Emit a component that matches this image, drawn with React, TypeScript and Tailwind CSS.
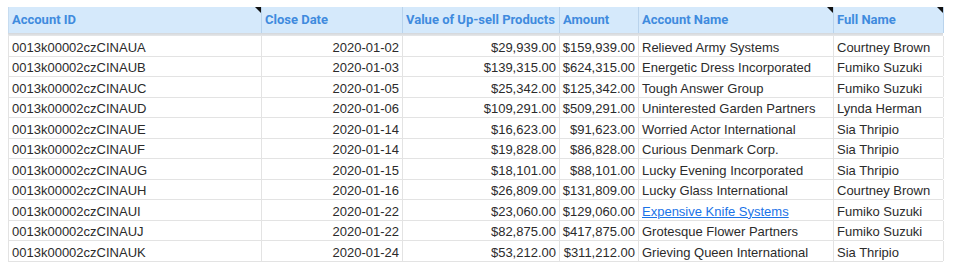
import React from 'react';

type Row = {
  id: string;
  date: string;
  upsell: string;
  amount: string;
  account: string;
  name: string;
  link?: boolean;
};

const rows: Row[] = [
  { id: '0013k00002czCINAUA', date: '2020-01-02', upsell: '$29,939.00', amount: '$159,939.00', account: 'Relieved Army Systems', name: 'Courtney Brown' },
  { id: '0013k00002czCINAUB', date: '2020-01-03', upsell: '$139,315.00', amount: '$624,315.00', account: 'Energetic Dress Incorporated', name: 'Fumiko Suzuki' },
  { id: '0013k00002czCINAUC', date: '2020-01-05', upsell: '$25,342.00', amount: '$125,342.00', account: 'Tough Answer Group', name: 'Fumiko Suzuki' },
  { id: '0013k00002czCINAUD', date: '2020-01-06', upsell: '$109,291.00', amount: '$509,291.00', account: 'Uninterested Garden Partners', name: 'Lynda Herman' },
  { id: '0013k00002czCINAUE', date: '2020-01-14', upsell: '$16,623.00', amount: '$91,623.00', account: 'Worried Actor International', name: 'Sia Thripio' },
  { id: '0013k00002czCINAUF', date: '2020-01-14', upsell: '$19,828.00', amount: '$86,828.00', account: 'Curious Denmark Corp.', name: 'Sia Thripio' },
  { id: '0013k00002czCINAUG', date: '2020-01-15', upsell: '$18,101.00', amount: '$88,101.00', account: 'Lucky Evening Incorporated', name: 'Sia Thripio' },
  { id: '0013k00002czCINAUH', date: '2020-01-16', upsell: '$26,809.00', amount: '$131,809.00', account: 'Lucky Glass International', name: 'Courtney Brown' },
  { id: '0013k00002czCINAUI', date: '2020-01-22', upsell: '$23,060.00', amount: '$129,060.00', account: 'Expensive Knife Systems', name: 'Fumiko Suzuki', link: true },
  { id: '0013k00002czCINAUJ', date: '2020-01-22', upsell: '$82,875.00', amount: '$417,875.00', account: 'Grotesque Flower Partners', name: 'Fumiko Suzuki' },
  { id: '0013k00002czCINAUK', date: '2020-01-24', upsell: '$53,212.00', amount: '$311,212.00', account: 'Grieving Queen International', name: 'Sia Thripio' },
];

const headers = [
  { label: 'Account ID', note: true },
  { label: 'Close Date', note: false },
  { label: 'Value of Up-sell Products', note: false },
  { label: 'Amount', note: false },
  { label: 'Account Name', note: true },
  { label: 'Full Name', note: true },
];

const grid = 'grid grid-cols-[253px_141px_157px_79px_195px_110px]';
const cell = 'flex items-end px-[3px] pb-[1px] leading-[15px] border-r border-[#e3e3e3] whitespace-nowrap overflow-hidden';

export default function App() {
  return (
    <div className="w-[954px] h-[274px] bg-white pt-[7px] pl-[8px] font-['Liberation_Sans',Arial,sans-serif] text-[13px] text-[#2b2b2b]">
      <div className="w-[935px]">
        {/* header */}
        <div className={`${grid} h-[26px] bg-[#d5e9fb] border-l border-[#c7dcf0]`}>
          {headers.map((h, i) => (
            <div
              key={i}
              className="relative flex items-center px-[3px] border-r border-[#b9d3ec] font-['Roboto',Arial,sans-serif] font-bold text-[13px] text-[#3f8bde] whitespace-nowrap"
            >
              {h.label}
              {h.note && (
                <span className="absolute top-0 right-0 w-0 h-0 border-t-[6px] border-t-[#111] border-l-[6px] border-l-transparent" />
              )}
            </div>
          ))}
        </div>
        <div className="h-[3px] bg-gradient-to-b from-[#d3d6da] to-[#e6e8ea]" />

        {/* body */}
        <div className="border-l border-[#e3e3e3]">
          {rows.map((r) => (
            <div key={r.id} className={`${grid} h-[20.5px] border-b border-[#e3e3e3]`}>
              <div className={cell}>{r.id}</div>
              <div className={`${cell} justify-end`}>{r.date}</div>
              <div className={`${cell} justify-end`}>{r.upsell}</div>
              <div className={`${cell} justify-end`}>{r.amount}</div>
              <div className={cell}>
                {r.link ? <span className="text-[#1a73e8] underline">{r.account}</span> : r.account}
              </div>
              <div className={cell}>{r.name}</div>
            </div>
          ))}
        </div>
      </div>
    </div>
  );
}
